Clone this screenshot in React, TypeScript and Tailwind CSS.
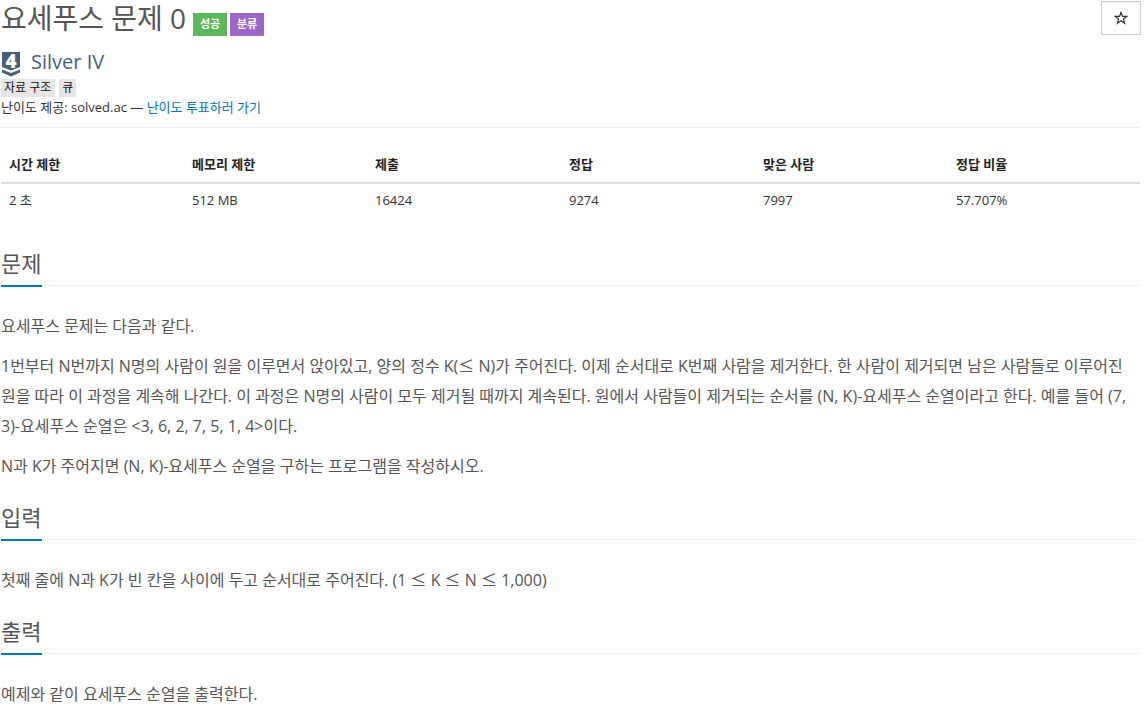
const font = "[font-family:'Open_Sans','Noto_Sans_CJK_KR',sans-serif]";

const stats = [
  { label: "시간 제한", value: "2 초", width: "w-[183px]" },
  { label: "메모리 제한", value: "512 MB", width: "w-[183px]" },
  { label: "제출", value: "16424", width: "w-[194px]" },
  { label: "정답", value: "9274", width: "w-[194px]" },
  { label: "맞은 사람", value: "7997", width: "w-[193px]" },
  { label: "정답 비율", value: "57.707%", width: "w-[183px]" },
];

const SectionTitle = ({ children }: { children: string }) => (
  <div className="h-[39px] border-b border-dotted border-[#e5e5e5]">
    <h2 className="inline-block h-[40px] border-b-2 border-[#0076c0] pr-[1px] text-[22px] leading-[32px] text-[#555]">
      {children}
    </h2>
  </div>
);

// the ≤ sign comes from the CJK font in the original, so it is full width
const Le = () => <span className="[font-family:'Noto_Sans_CJK_KR',sans-serif] leading-none">≤</span>;

const TierIcon = () => (
  <svg width="20" height="25" viewBox="0 0 20 25" className="shrink-0 overflow-visible">
    <path d="M1 0H19V15L10 18.5L1 15Z" fill="#435f7a" />
    <path d="M1 17.5L10 21L19 17.5V20.5L10 24.5L1 20.5Z" fill="#435f7a" />
    <text x="10" y="16" textAnchor="middle" fontSize="19" fontWeight="800" fill="#fff" fontFamily="Open Sans">
      4
    </text>
  </svg>
);

export default function App() {
  return (
    <div className={`${font} h-[707px] w-[1144px] overflow-hidden bg-white pl-[1px] pr-[4px] text-[14px] text-[#333]`}>
      <div className="flex h-[44px] items-start justify-between">
        <div className="flex items-start">
          <h1 className="text-[28px] leading-[36px] text-[#555]">요세푸스 문제 0</h1>
          <span className="ml-[7px] mt-[13px] flex h-[23px] w-[34px] items-center justify-center bg-[#5cb85c] text-[11px] font-bold text-white">
            성공
          </span>
          <span className="ml-[3px] mt-[13px] flex h-[23px] w-[34px] items-center justify-center bg-[#9b65c9] text-[11px] font-bold text-white">
            분류
          </span>
        </div>
        <button className="mt-[1px] -mr-[1px] flex h-[34px] w-[40px] items-center justify-center border border-[#ccc] bg-white">
          <svg width="14" height="14" viewBox="0 0 14 14">
            <path
              d="M7 1.4L8.5 5.4H12.8L9.4 8L10.6 12.2L7 9.7L3.4 12.2L4.6 8L1.2 5.4H5.5Z"
              fill="none"
              stroke="#333"
              strokeWidth="1.2"
            />
          </svg>
        </button>
      </div>
      <div className="flex h-[35px] items-start gap-[10px] pt-[8px]">
        <TierIcon />
        <span className="text-[20px] leading-[20px] text-[#435f7a]">Silver IV</span>
      </div>
      <div className="flex h-[18px] gap-[4px] text-[12px] leading-[18px] text-[#111]">
        <span className="bg-[#e5e5e5] pl-[3px] pr-[4px]">자료 구조</span>
        <span className="bg-[#e5e5e5] px-[3px]">큐</span>
      </div>
      <p className="h-[20px] text-[13px] leading-[20px]">
        난이도 제공: solved.ac — <span className="text-[#0076c0]">난이도 투표하러 가기</span>
      </p>
      <hr className="mt-[10px] border-[#eee]" />
      <div className="mt-[20px] text-[13px]">
        <div className="flex h-[36px] items-center border-b-2 border-[#ddd] font-bold text-[#222]">
          {stats.map((s) => (
            <div key={s.label} className={`${s.width} pl-[8px]`}>
              {s.label}
            </div>
          ))}
        </div>
        <div className="flex h-[36px] items-center pb-[2px]">
          {stats.map((s) => (
            <div key={s.label} className={`${s.width} pl-[8px]`}>
              {s.value}
            </div>
          ))}
        </div>
      </div>
      <div className="mt-[27px]">
        <SectionTitle>문제</SectionTitle>
        <div className="mt-[25px] text-[16px] leading-[30px] text-[#555]">
          <p>요세푸스 문제는 다음과 같다.</p>
          <p className="mt-[10px]">
            1번부터 N번까지 N명의 사람이 원을 이루면서 앉아있고, 양의 정수 K(<Le /> N)가 주어진다. 이제 순서대로 K번째 사람을 제거한다. 한 사람이 제거되면 남은 사람들로 이루어진 원을 따라 이 과정을 계속해 나간다. 이 과정은 N명의 사람이 모두 제거될 때까지 계속된다. 원에서 사람들이 제거되는 순서를 (N, K)-요세푸스 순열이라고 한다. 예를 들어 (7, 3)-요세푸스 순열은 &lt;3, 6, 2, 7, 5, 1, 4&gt;이다.
          </p>
          <p className="mt-[10px]">N과 K가 주어지면 (N, K)-요세푸스 순열을 구하는 프로그램을 작성하시오.</p>
        </div>
      </div>
      <div className="mt-[20px]">
        <SectionTitle>입력</SectionTitle>
        <p className="mt-[25px] text-[16px] leading-[30px] text-[#555]">
          첫째 줄에 N과 K가 빈 칸을 사이에 두고 순서대로 주어진다. (1 <Le /> K <Le /> N <Le /> 1,000)
        </p>
      </div>
      <div className="mt-[20px]">
        <SectionTitle>출력</SectionTitle>
        <p className="mt-[25px] text-[16px] leading-[30px] text-[#555]">
          예제와 같이 요세푸스 순열을 출력한다.
        </p>
      </div>
    </div>
  );
}
